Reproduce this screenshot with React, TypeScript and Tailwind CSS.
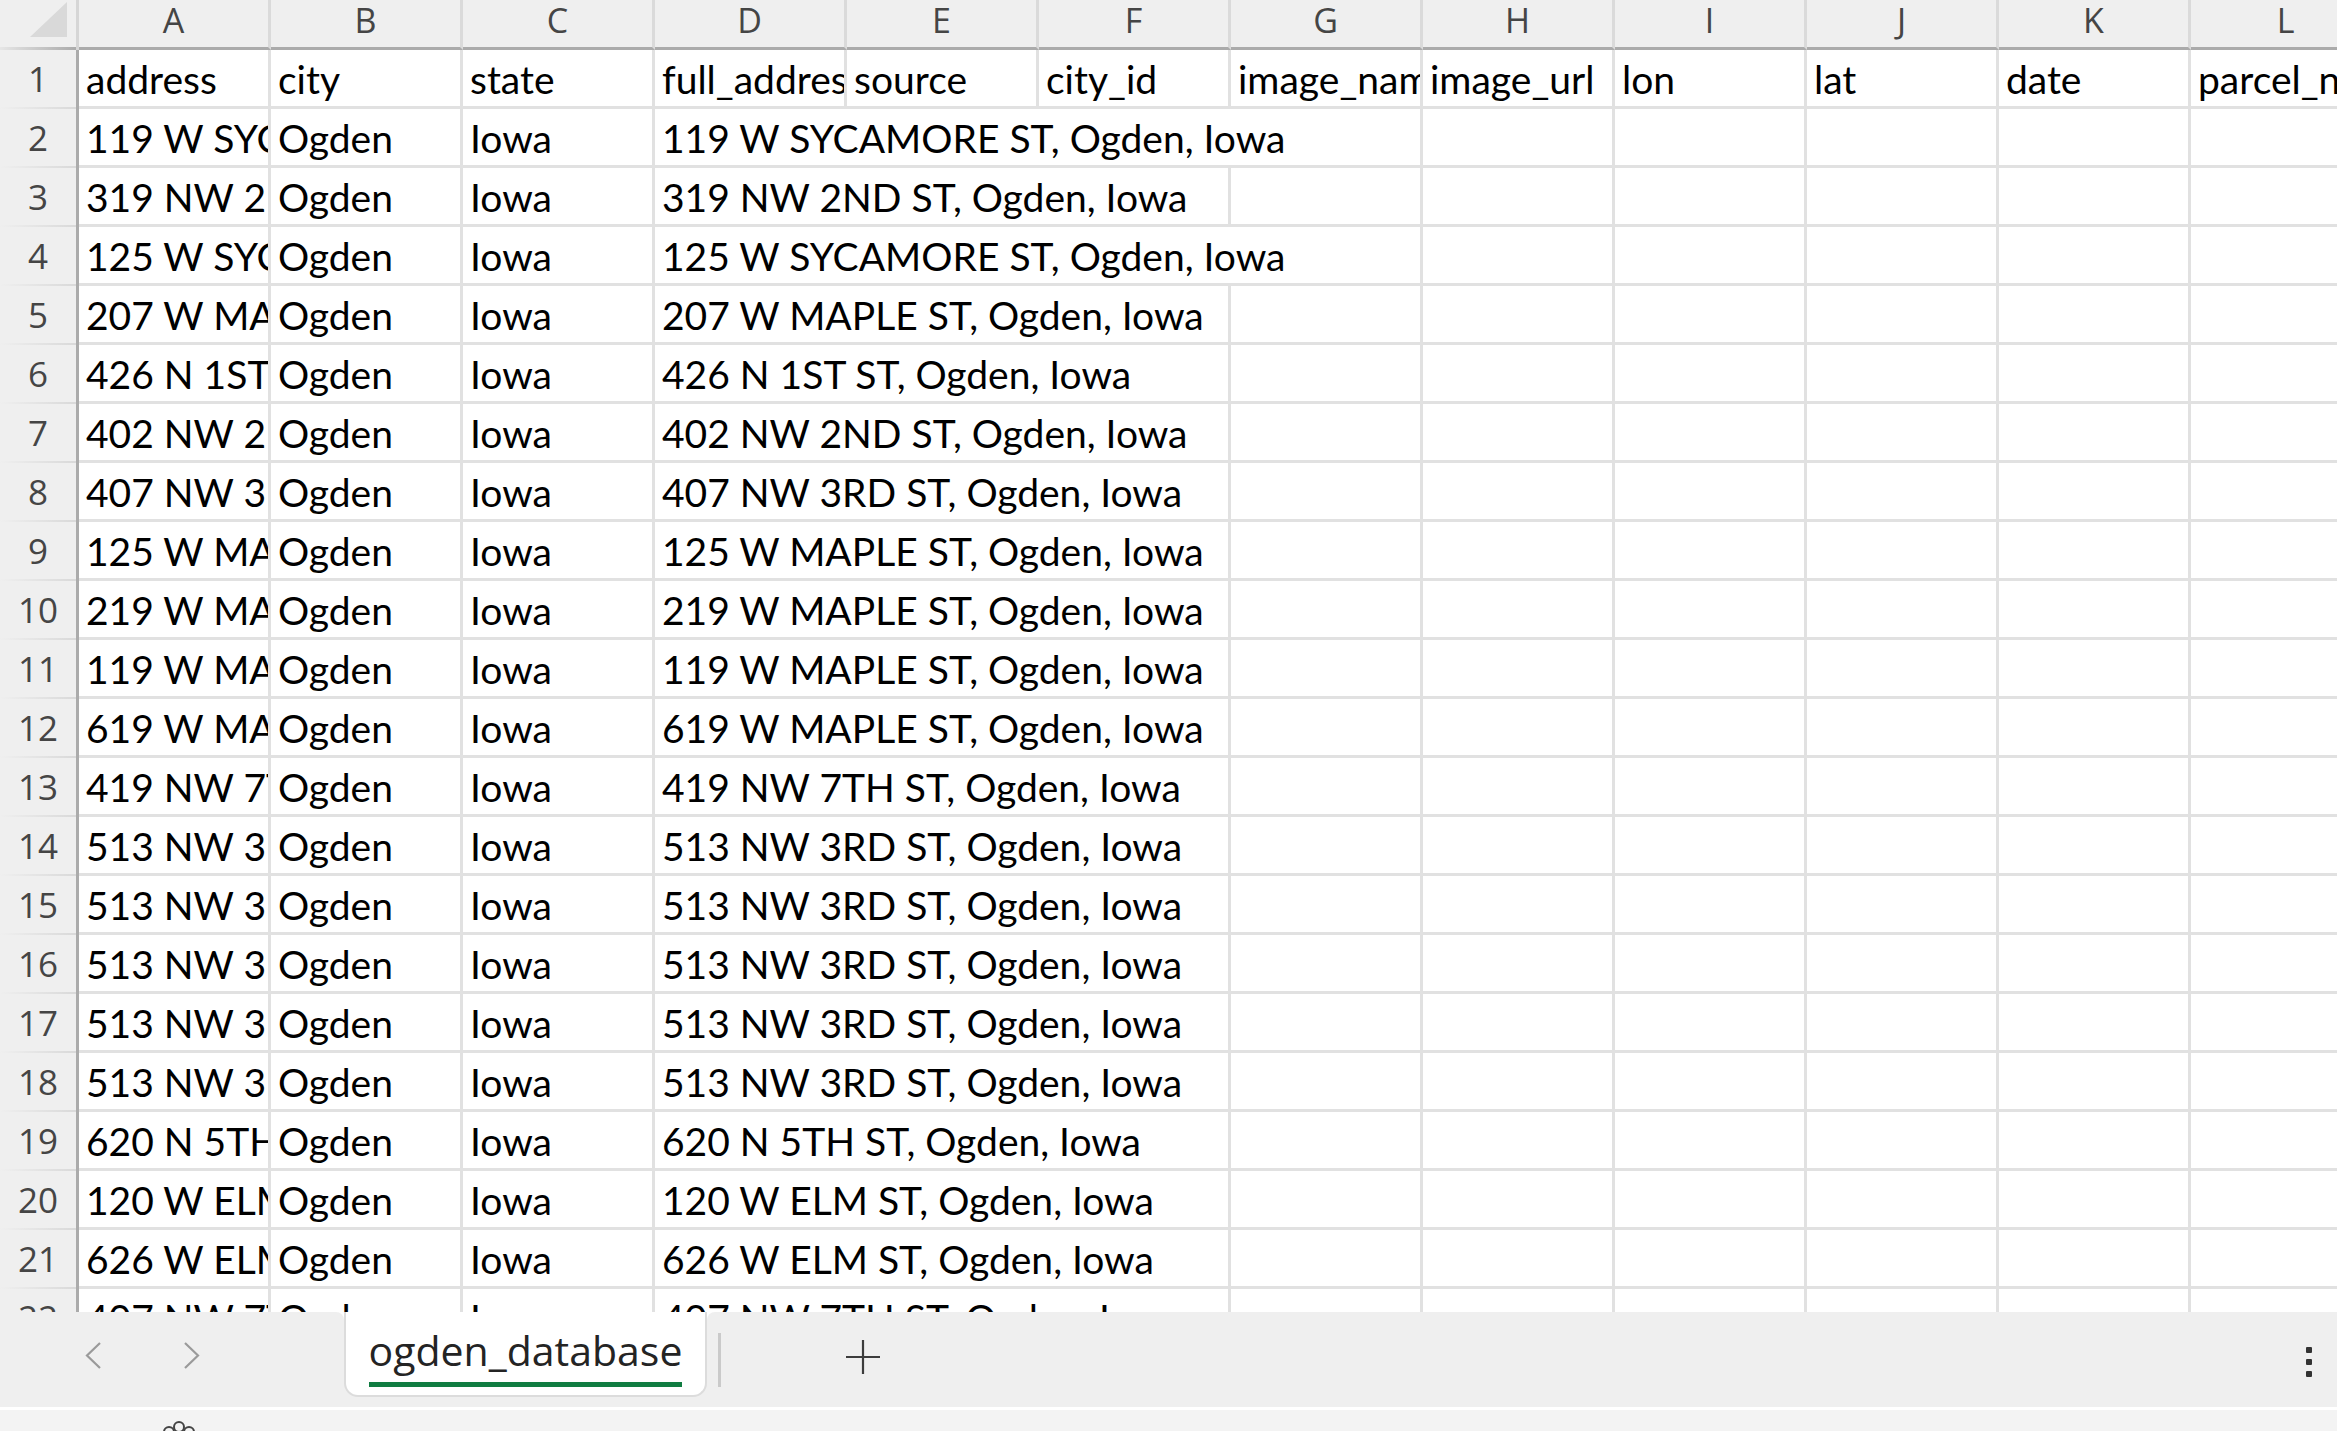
import React from 'react';

const COLS = ['A', 'B', 'C', 'D', 'E', 'F', 'G', 'H', 'I', 'J', 'K', 'L'];

const HEADERS = [
  'address', 'city', 'state', 'full_address', 'source', 'city_id',
  'image_name', 'image_url', 'lon', 'lat', 'date', 'parcel_number',
];

const STREETS = [
  '119 W SYCAMORE ST', '319 NW 2ND ST', '125 W SYCAMORE ST', '207 W MAPLE ST',
  '426 N 1ST ST', '402 NW 2ND ST', '407 NW 3RD ST', '125 W MAPLE ST',
  '219 W MAPLE ST', '119 W MAPLE ST', '619 W MAPLE ST', '419 NW 7TH ST',
  '513 NW 3RD ST', '513 NW 3RD ST', '513 NW 3RD ST', '513 NW 3RD ST',
  '513 NW 3RD ST', '620 N 5TH ST', '120 W ELM ST', '626 W ELM ST', '407 NW 7TH ST',
];

// widths for a cell that overflows into its empty neighbours
const SPAN_W: Record<number, string> = {
  1: 'w-[192px]',
  3: 'w-[576px]',
  4: 'w-[768px]',
};

const cellFont = "font-['Lato','Carlito',sans-serif]";
const uiFont = "font-['Open_Sans','Noto_Sans',sans-serif]";

function Cell({ text, span = 1 }: { text?: string; span?: number }) {
  return (
    <div
      className={`${SPAN_W[span]} shrink-0 h-full border-r-[3px] border-b-[3px] border-[#e1e1e1] overflow-hidden whitespace-nowrap pl-[7px] text-[39px] leading-[58px] text-black ${cellFont}`}
    >
      {text}
    </div>
  );
}

function RowHead({ n }: { n: number }) {
  return (
    <div className="w-[79px] shrink-0 h-full flex flex-col bg-[#efefef] border-r-[3px] border-[#ababab]">
      <div className={`flex-1 text-center text-[35px] leading-[57px] text-[#454545] ${uiFont}`}>{n}</div>
      <div className="h-[3px] bg-gradient-to-r from-[#efefef] to-[#d9d9d9]" />
    </div>
  );
}

function SheetRow({ n, cells }: { n: number; cells: { text?: string; span?: number }[] }) {
  return (
    <div className="flex h-[59px] shrink-0">
      <RowHead n={n} />
      {cells.map((c, i) => (
        <Cell key={i} text={c.text} span={c.span} />
      ))}
    </div>
  );
}

function buildRow(street: string) {
  const span = street.includes('SYCAMORE') ? 4 : 3;
  const cells: { text?: string; span?: number }[] = [
    { text: street },
    { text: 'Ogden' },
    { text: 'Iowa' },
    { text: `${street}, Ogden, Iowa`, span },
  ];
  for (let i = 3 + span; i < COLS.length; i++) cells.push({});
  return cells;
}

function ColumnHeader() {
  return (
    <div className="flex h-[50px] shrink-0 bg-[#efefef]">
      <div className="w-[79px] shrink-0 h-full flex flex-col border-r-[3px] border-[#d6d6d6]">
        <div className="flex-1 flex items-start justify-end pr-[9px] pt-[2px]">
          <svg width="37" height="35" viewBox="0 0 37 35">
            <polygon points="0,35 37,35 37,0" fill="#d9d9d9" />
          </svg>
        </div>
        <div className="h-[3px] bg-gradient-to-r from-[#e6e6e6] to-[#ababab]" />
      </div>
      {COLS.map((c) => (
        <div
          key={c}
          className={`w-[192px] shrink-0 h-full border-r-[3px] border-r-[#dadada] border-b-[3px] border-b-[#ababab] text-center text-[34px] leading-[40px] text-[#454545] ${uiFont}`}
        >
          {c}
        </div>
      ))}
    </div>
  );
}

function Chevron({ dir }: { dir: 'left' | 'right' }) {
  return (
    <svg width="17" height="27" viewBox="0 0 17 27" fill="none" stroke="#9a9a9a" strokeWidth="2.2">
      {dir === 'left' ? <polyline points="15,1 2,13.5 15,26" /> : <polyline points="2,1 15,13.5 2,26" />}
    </svg>
  );
}

function TabBar() {
  return (
    <div className="flex h-[95px] shrink-0 bg-white">
      <div className="w-[344px] h-full bg-[#efefef] rounded-tr-[8px] flex items-start pt-[30px] pl-[85px] gap-[81px]">
        <Chevron dir="left" />
        <Chevron dir="right" />
      </div>
      <div className="w-[363px] h-full bg-[#efefef] flex flex-col">
        <div className="h-[85px] bg-white border-x-2 border-b-2 border-[#dcdcdc] rounded-b-[14px] flex flex-col items-center pt-[16px]">
          <div className="flex flex-col items-stretch">
            <span className={`text-[41px] leading-[44px] text-[#242424] ${uiFont}`}>ogden_database</span>
            <div className="mt-[10px] h-[5px] bg-[#107c41]" />
          </div>
        </div>
      </div>
      <div className="flex-1 h-full bg-[#efefef] rounded-tl-[8px] flex items-start">
        <div className="ml-[11px] mt-[21px] w-[3px] h-[54px] bg-[#cacaca]" />
        <svg className="ml-[125px] mt-[28px]" width="34" height="34" viewBox="0 0 34 34" stroke="#3c3c3c" strokeWidth="2.2">
          <line x1="17" y1="0" x2="17" y2="34" />
          <line x1="0" y1="17" x2="34" y2="17" />
        </svg>
        <div className="ml-auto mr-[25px] mt-[35px] flex flex-col gap-[6px]">
          <div className="w-[6px] h-[6px] bg-[#333333] rounded-[1px]" />
          <div className="w-[6px] h-[6px] bg-[#333333] rounded-[1px]" />
          <div className="w-[6px] h-[6px] bg-[#333333] rounded-[1px]" />
        </div>
      </div>
    </div>
  );
}

function StatusBar() {
  return (
    <div className="mt-[3px] h-[21px] shrink-0 bg-[#f3f3f3] overflow-hidden">
      <svg className="ml-[160px] mt-[11px]" width="38" height="38" viewBox="0 0 38 38" fill="none" stroke="#444" strokeWidth="2">
        <circle cx="19" cy="6" r="5" />
        <circle cx="9" cy="11" r="5" />
        <circle cx="29" cy="11" r="5" />
        <circle cx="19" cy="19" r="6" />
      </svg>
    </div>
  );
}

export default function App() {
  return (
    <div className="w-[2337px] h-[1431px] overflow-hidden bg-white flex flex-col">
      <div className="h-[1312px] shrink-0 overflow-hidden flex flex-col">
        <ColumnHeader />
        <SheetRow n={1} cells={HEADERS.map((h) => ({ text: h }))} />
        {STREETS.map((s, i) => (
          <SheetRow key={i} n={i + 2} cells={buildRow(s)} />
        ))}
      </div>
      <TabBar />
      <StatusBar />
    </div>
  );
}
